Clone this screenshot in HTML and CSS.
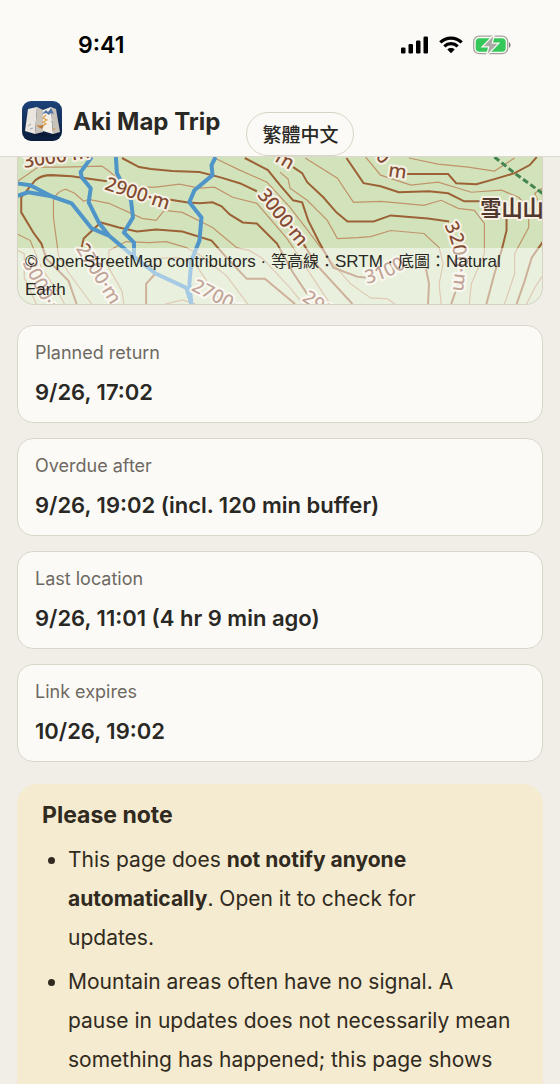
FILE: index.html
```html
<!DOCTYPE html>
<html lang="en">
<head>
  <meta charset="UTF-8">
  <meta name="viewport" content="width=device-width, initial-scale=1.0">
  <title>Aki Map Trip</title>
  <link rel="stylesheet" href="styles.css">
</head>
<body>
  <div class="status-bar">
    <span class="time">9:41</span>
    <div class="status-icons">
      <svg width="28" height="18" viewBox="0 0 28 18">
        <rect x="0" y="11.500" width="4.500" height="6" rx="1.300"/>
        <rect x="7.500" y="8" width="4.500" height="9.500" rx="1.300"/>
        <rect x="15" y="4.500" width="4.500" height="13" rx="1.300"/>
        <rect x="22.500" y="0.500" width="4.500" height="17" rx="1.300"/>
      </svg>
      <svg width="24" height="18" viewBox="0 0 24 18">
        <g fill="none" stroke="#000" stroke-width="3.200">
          <path d="M1.300 6.300C7.300 0.600 16.700 0.600 22.700 6.300"/>
          <path d="M5.300 10.400C9.100 6.800 14.900 6.800 18.700 10.400"/>
        </g>
        <path d="M8.300 13.400C10.400 11.500 13.600 11.500 15.700 13.400L12 17.300Z"/>
      </svg>
      <svg width="38" height="20" viewBox="0 0 38 20">
        <rect x="0.700" y="1.200" width="34" height="17.500" rx="5.500" fill="none" stroke="#a5a29c" stroke-width="1.300"/>
        <rect x="2.700" y="3.200" width="30" height="13.500" rx="3.800" fill="#34c759"/>
        <path d="M36 7.300C38 8.300 38 11.700 36 12.700Z" fill="#77756f"/>
        <path d="M20.500 1L10.500 11.300H16.500L14.500 19L24.500 8.700H18.500Z" fill="#a9a9a6" stroke="#fcfaf6" stroke-width="2.400" paint-order="stroke"/>
      </svg>
    </div>
  </div>

  <header class="header">
    <div class="brand">
      <svg class="logo" viewBox="0 0 40 40">
        <defs>
          <linearGradient id="navy" x1="0" y1="0" x2="0" y2="1">
            <stop offset="0" stop-color="#1d4379"/>
            <stop offset="1" stop-color="#0b1d3d"/>
          </linearGradient>
        </defs>
        <rect width="40" height="40" rx="9" fill="url(#navy)"/>
        <path d="M5 31L13 33L21 31L28 34L38 32L37 35L27 36L14 35Z" fill="#081630" opacity="0.7"/>
        <path d="M6 8L15 6L13 33L3 30Z" fill="#eae6df"/>
        <path d="M15 6L21 9L21 31L13 33Z" fill="#cbc4bb"/>
        <path d="M21 9L29 6L31 33L21 30Z" fill="#f5f0e7"/>
        <path d="M29 6L34 8L38 31L31 33Z" fill="#c9c2b9"/>
        <path d="M20 13L24 9L26 11L29 7L32 13L29 12L27 14L24 12Z" fill="#5276a5"/>
        <path d="M24 14L21 17L25 19L21 21L24 23L18 26L15 24" fill="none" stroke="#dda04b" stroke-width="1.200"/>
        <path d="M15 25L22 24L20 28Z" fill="#b97838"/>
        <path d="M6 25L9 23M8 28L11 27M29 20L31 23" stroke="#9cabb5" stroke-width="1"/>
        <circle cx="32" cy="28" r="1" fill="#d99a4a"/>
      </svg>
      <span class="brand-name">Aki Map Trip</span>
    </div>
    <button class="lang" type="button" lang="zh-Hant">繁體中文</button>
  </header>

  <main class="content">
    <div class="map">
      <svg class="map-canvas" viewBox="0 0 524 146" preserveAspectRatio="xMidYMid slice">
        <rect width="524" height="146" fill="#d2e3bc"/>
        <!-- minor contours -->
        <g class="contour-minor">
          <path d="M0 25L22 10L45 10L85 9L92 14L105 25L122 30L139 30L162 27L182 31L197 30L215 40L239 46L269 81L292 116L312 146"/>
          <path d="M75 146L52 115L42 98L37 60L37 43Q40 34 49 32L58 36L67 44L72 42L92 46L112 55L125 61L139 63L147 53L165 55L195 70L219 90L232 93L245 101L272 130L285 146"/>
          <path d="M107 146L105 133L92 110L92 93L109 84L132 85L149 84L169 90L182 97L209 118L230 146"/>
          <path d="M135 101L162 100L179 108L205 146"/>
          <path d="M197 1L222 13L249 25L272 50L292 76L312 103L332 126L352 140L369 141L376 146"/>
          <path d="M262 15L270 22L272 31L289 43L309 63L319 81L339 80L352 79L372 73L405 76L420 90L424 106L420 126L422 146"/>
          <path d="M287 1L319 21L335 45L362 44L405 48L422 43L439 51L455 53L465 66L465 96L452 126L450 146"/>
          <path d="M347 0L362 18L392 28L419 25L452 35L482 33L499 40L509 51L509 70L495 96L495 116L485 146"/>
          <path d="M390 1L419 7L449 10L475 14L495 1"/>
          <path d="M524 30L515 36L520 48L524 60"/>
          <path d="M524 116L515 130L507 146"/>
          <path d="M0 76L14 83L25 110L42 135L48 146"/>
          <path d="M0 92L8 96L8 120L20 146M148 146L165 142L178 146"/>
        </g>
        <!-- major contours -->
        <g class="contour-major">
          <path d="M105 1L122 10L134 12L155 14L182 15L202 20L222 26L239 34M285 86L299 108L334 146"/>
          <path d="M90 24L55 19L35 18Q25 18 19 23L5 40L5 55L17 75L25 86L30 101L52 123L60 146"/>
          <path d="M150 42L169 45L182 46L195 45L204 49L212 57L225 65L239 66L259 86L275 115L289 136"/>
          <path d="M65 90L67 81L84 65L102 70L120 74L139 72L165 74L194 83L209 100L229 121L247 121L277 146"/>
          <path d="M227 1L250 13L262 28L275 43L284 45L290 63L300 83L315 110L339 119L349 120"/>
          <path d="M275 10L284 16L289 25L305 40L318 55L329 64L355 64L372 58L409 61L430 64"/>
          <path d="M328 1L345 26L362 29L380 35L410 34L429 36L445 44L462 44M487 56L487 73L482 93L475 116L467 146"/>
          <path d="M388 17L429 17L437 26L457 27L475 22L495 16L510 8L517 0"/>
          <path d="M524 83L512 100L505 123L497 146M407 111L410 126L409 146M439 126L432 146M129 146L129 126L139 115"/>
        </g>
        <!-- rivers -->
        <g class="river">
          <path d="M0 26L14 28L35 39L55 46L75 71L92 78L117 99L139 116L169 130L174 146"/>
          <path d="M0 39L12 35L35 39"/>
          <path d="M75 0L64 15L65 20L74 31L72 45L82 65L92 78"/>
          <path d="M99 0L100 16L114 43L116 60L107 75L117 85L117 99"/>
          <path d="M198 0L194 8L195 18L177 33L172 45L184 60L182 83L174 103L172 126L174 146"/>
        </g>
        <path class="trail" d="M475 0L495 16L524 37"/>
        <g class="contour-label">
          <text transform="translate(8 11) rotate(-9)">3000·m</text>
          <text transform="translate(87 32) rotate(18)">2900·m</text>
          <text transform="translate(239 38) rotate(51)">3000·m</text>
          <text transform="translate(59 91) rotate(58)">2700·m</text>
          <text transform="translate(6 105) rotate(63)">3000·m</text>
          <text transform="translate(173 132) rotate(27)">2700·m</text>
          <text transform="translate(283 142) rotate(35)">2900·m</text>
          <text transform="translate(256 4) rotate(30)">m</text>
          <text transform="translate(369 19) rotate(8)">m</text>
          <text transform="translate(356 1) rotate(40)">0</text>
          <path id="arc3200" d="M425 68Q440 95 433 134" fill="none"/>
          <path id="arc3100" d="M348 126Q374 120 390 107L405 96" fill="none"/>
          <text><textPath href="#arc3200">3200·m</textPath></text>
          <text><textPath href="#arc3100">3100</textPath></text>
          <text class="peak" x="461" y="59">雪山山</text>
        </g>
      </svg>
      <div class="attribution">© OpenStreetMap contributors · <span lang="zh-Hant">等高線：</span>SRTM · <span lang="zh-Hant">底圖：</span>Natural Earth</div>
    </div>

    <dl class="details">
      <div class="card">
        <dt>Planned return</dt>
        <dd>9/26, 17:02</dd>
      </div>
      <div class="card">
        <dt>Overdue after</dt>
        <dd>9/26, 19:02 (incl. 120 min buffer)</dd>
      </div>
      <div class="card">
        <dt>Last location</dt>
        <dd>9/26, 11:01 (4 hr 9 min ago)</dd>
      </div>
      <div class="card">
        <dt>Link expires</dt>
        <dd>10/26, 19:02</dd>
      </div>
    </dl>

    <section class="note">
      <h2>Please note</h2>
      <ul>
        <li>This page does <strong>not notify anyone automatically</strong>. Open it to check for<br>updates.</li>
        <li>Mountain areas often have no signal. A pause in updates does not necessarily mean something has happened; this page shows</li>
      </ul>
    </section>
  </main>
</body>
</html>
```
FILE: styles.css
```css
* {
  margin: 0;
  padding: 0;
  box-sizing: border-box;
}

body {
  font-family: Inter, "Noto Sans CJK TC", sans-serif;
  background: #f1eee8;
  color: #292824;
}

/* Status bar */
.status-bar {
  display: flex;
  justify-content: space-between;
  align-items: center;
  height: 90px;
  padding: 0 49px 0 78px;
  background: #fcfaf6;
  color: #000;
}

.time {
  font-size: 23px;
  font-weight: 600;
}

.status-icons {
  display: flex;
  align-items: center;
  gap: 10px;
}

/* Header */
.header {
  display: flex;
  align-items: flex-end;
  gap: 26px;
  padding: 11px 22px 0;
  background: #fcfaf6;
  border-bottom: 1px solid #ddd8cf;
}

.brand {
  display: flex;
  align-items: center;
  align-self: flex-start;
  gap: 11px;
}

.logo {
  width: 40px;
  height: 40px;
}

.brand-name {
  font-size: 24px;
  font-weight: 700;
}

.lang {
  height: 44px;
  margin-top: 11px;
  padding: 0 15px 2px;
  border: 1px solid #d9d3c5;
  border-radius: 22px;
  background: #fcfaf6;
  color: #292824;
  font-family: "Noto Sans CJK TC", sans-serif;
  font-size: 19px;
  font-weight: 500;
  white-space: nowrap;
}

.content {
  padding: 0 17px;
}

/* Map */
.map {
  position: relative;
  height: 148px;
  border: 1px solid #d5d2c3;
  border-top: none;
  border-radius: 0 0 18px 18px;
  overflow: hidden;
}

.map-canvas {
  display: block;
  width: 100%;
  height: 100%;
}

.contour-minor path {
  fill: none;
  stroke: #c0936a;
  stroke-width: 1.2;
}

.contour-major path {
  fill: none;
  stroke: #9c6236;
  stroke-width: 2;
}

.river path {
  fill: none;
  stroke: #4f95c8;
  stroke-width: 4;
  stroke-linejoin: round;
}

.trail {
  fill: none;
  stroke: #438451;
  stroke-width: 3;
  stroke-dasharray: 6 3;
}

.contour-label text {
  font-family: "Noto Sans", sans-serif;
  font-size: 19px;
  font-weight: 500;
  fill: #824b31;
  stroke: #f7f1e5;
  stroke-width: 4;
  stroke-linejoin: round;
  paint-order: stroke;
}

.contour-label .peak {
  font-family: "Noto Sans CJK TC", sans-serif;
  font-size: 21px;
  font-weight: 700;
  fill: #51382f;
}

.attribution {
  position: absolute;
  left: 0;
  right: 0;
  bottom: 0;
  padding: 0 7px;
  background: rgba(255, 255, 255, 0.5);
  font-family: "Liberation Sans", "Noto Sans CJK TC", sans-serif;
  font-size: 17px;
  line-height: 28px;
}

.attribution span {
  font-size: 16px;
}

/* Trip details */
.details {
  display: grid;
  gap: 15px;
  margin-top: 20px;
}

.card {
  padding: 15px 17px;
  border: 1px solid #dbd6ca;
  border-radius: 16px;
  background: #fcfaf6;
}

.card dt {
  color: #6d6962;
  font-size: 18px;
  line-height: 24px;
}

.card dd {
  margin-top: 12px;
  font-size: 22px;
  font-weight: 600;
  line-height: 30px;
}

/* Notice */
.note {
  margin-top: 22px;
  padding: 16px 25px 40px;
  border-radius: 20px;
  background: #f5ebd0;
  color: #302a20;
}

.note h2 {
  font-size: 23px;
  font-weight: 700;
  line-height: 30px;
}

.note ul {
  margin-top: 10px;
  padding-left: 26px;
}

.note li {
  margin-bottom: 5px;
  font-size: 21px;
  line-height: 39px;
}
```
